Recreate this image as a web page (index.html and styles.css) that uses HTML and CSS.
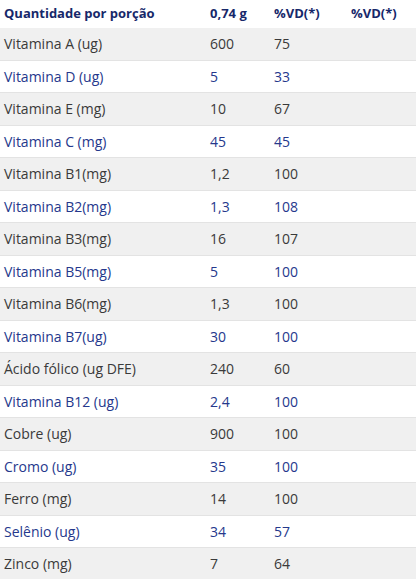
FILE: index.html
```html
<!DOCTYPE html>
<html lang="pt-BR">
<head>
<meta charset="utf-8">
<title>Tabela nutricional</title>
<link rel="stylesheet" href="styles.css">
</head>
<body>
<div class="table">
  <div class="row head"><span>Quantidade por porção</span><span>0,74 g</span><span>%VD(*)</span><span>%VD(*)</span></div>
  <div class="row odd"><span>Vitamina A (ug)</span><span>600</span><span>75</span><span></span></div>
  <div class="row even"><span>Vitamina D (ug)</span><span>5</span><span>33</span><span></span></div>
  <div class="row odd"><span>Vitamina E (mg)</span><span>10</span><span>67</span><span></span></div>
  <div class="row even"><span>Vitamina C (mg)</span><span>45</span><span>45</span><span></span></div>
  <div class="row odd"><span>Vitamina B1(mg)</span><span>1,2</span><span>100</span><span></span></div>
  <div class="row even"><span>Vitamina B2(mg)</span><span>1,3</span><span>108</span><span></span></div>
  <div class="row odd"><span>Vitamina B3(mg)</span><span>16</span><span>107</span><span></span></div>
  <div class="row even"><span>Vitamina B5(mg)</span><span>5</span><span>100</span><span></span></div>
  <div class="row odd"><span>Vitamina B6(mg)</span><span>1,3</span><span>100</span><span></span></div>
  <div class="row even"><span>Vitamina B7(ug)</span><span>30</span><span>100</span><span></span></div>
  <div class="row odd"><span>Ácido fólico (ug DFE)</span><span>240</span><span>60</span><span></span></div>
  <div class="row even"><span>Vitamina B12 (ug)</span><span>2,4</span><span>100</span><span></span></div>
  <div class="row odd"><span>Cobre (ug)</span><span>900</span><span>100</span><span></span></div>
  <div class="row even"><span>Cromo (ug)</span><span>35</span><span>100</span><span></span></div>
  <div class="row odd"><span>Ferro (mg)</span><span>14</span><span>100</span><span></span></div>
  <div class="row even"><span>Selênio (ug)</span><span>34</span><span>57</span><span></span></div>
  <div class="row odd"><span>Zinco (mg)</span><span>7</span><span>64</span><span></span></div>
</div>
</body>
</html>
```
FILE: styles.css
```css
html, body {
  margin: 0;
  padding: 0;
  background: #ffffff;
}
body {
  font-family: "Open Sans", "Liberation Sans", sans-serif;
  font-size: 14px;
  overflow: hidden;
}
.table {
  display: flex;
  flex-direction: column;
}
.row {
  display: grid;
  grid-template-columns: 206px 64px 77px 1fr;
  padding-left: 4px;
  align-items: center;
  box-sizing: border-box;
  height: 32.5px;
  border-bottom: 1px solid #e3e3e3;
  white-space: nowrap;
}
.head {
  height: 28px;
  border-bottom: none;
  font-size: 13px;
  font-weight: 700;
  color: #17286a;
  padding-bottom: 2px;
}
.odd {
  background: #f0f0f0;
  color: #3a3a3a;
}
.even {
  background: #ffffff;
  color: #25388c;
}
```
